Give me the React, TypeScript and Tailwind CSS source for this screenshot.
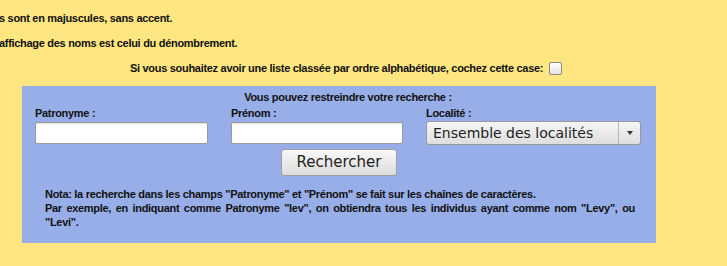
import { useState } from "react";

export default function App() {
  const [sorted, setSorted] = useState(false);

  return (
    <div className="min-h-[266px] w-[727px] overflow-hidden bg-[#ffe680] font-['Liberation_Sans',Arial,sans-serif] text-[11px] font-bold tracking-[-0.3px] text-[#111]">
      <div className="pt-[6px]">
        <p className="flex h-[25px] items-center -ml-[1px]">
          s sont en majuscules, sans accent.
        </p>
        <p className="flex h-[25px] items-center -ml-[1px]">
          affichage des noms est celui du dénombrement.
        </p>
        <p className="flex h-[25px] items-center pl-[130px]">
          Si vous souhaitez avoir une liste classée par ordre alphabétique,
          cochez cette case:
          <input
            type="checkbox"
            checked={sorted}
            onChange={() => setSorted(!sorted)}
            className="ml-[6px] h-[13px] w-[13px] appearance-none rounded-[2px] border border-[#8a8a8a] bg-gradient-to-b from-white to-[#e4e4e4]"
          />
        </p>
      </div>

      {/* search box */}
      <div className="ml-[22px] mt-[5px] h-[157px] w-[634px] bg-[#97aee8] pt-[4px]">
        <h3 className="h-[14px] pl-[18px] text-center leading-[14px]">
          Vous pouvez restreindre votre recherche :
        </h3>
        <div className="mt-[2px] grid grid-cols-[196px_195px_auto] pl-[13px]">
          <div>
            <label className="block h-[14px] leading-[14px]">Patronyme :</label>
            <input
              type="text"
              className="mt-[2px] h-[22px] w-[173px] rounded-[2px] border border-[#9a9a9a] bg-white shadow-[inset_0_1px_1px_rgba(0,0,0,0.12)]"
            />
          </div>
          <div>
            <label className="block h-[14px] leading-[14px]">Prénom :</label>
            <input
              type="text"
              className="mt-[2px] h-[22px] w-[172px] rounded-[2px] border border-[#9a9a9a] bg-white shadow-[inset_0_1px_1px_rgba(0,0,0,0.12)]"
            />
          </div>
          <div>
            <label className="block h-[14px] leading-[14px]">Localité :</label>
            <div className="mt-[1px] flex h-[24px] w-[215px] items-center rounded-[3px] border border-[#999] bg-gradient-to-b from-[#f6f6f6] to-[#dedede] font-['DejaVu_Sans',sans-serif] text-[14px] font-normal tracking-normal text-[#222]">
              <span className="flex-1 pl-[6px]">Ensemble des localités</span>
              <span className="flex h-full w-[22px] items-center justify-center border-l border-[#b5b5b5]">
                <span className="h-0 w-0 border-x-[3.5px] border-t-[4px] border-x-transparent border-t-[#333]"></span>
              </span>
            </div>
          </div>
        </div>
        <div className="mt-[4px] flex justify-center">
          <button className="h-[27px] w-[116px] rounded-[3px] border border-[#a0a0a0] bg-gradient-to-b from-[#f8f8f8] to-[#dcdcdc] font-['DejaVu_Sans',sans-serif] text-[15px] font-normal tracking-normal text-[#222]">
            Rechercher
          </button>
        </div>
        <p className="ml-[23px] mt-[11px] w-[590px] text-justify leading-[14px]">
          Nota: la recherche dans les champs "Patronyme" et "Prénom" se fait sur
          les chaînes de caractères.
          <br />
          Par exemple, en indiquant comme Patronyme "lev", on obtiendra tous les
          individus ayant comme nom "Levy", ou "Levi".
        </p>
      </div>
    </div>
  );
}
